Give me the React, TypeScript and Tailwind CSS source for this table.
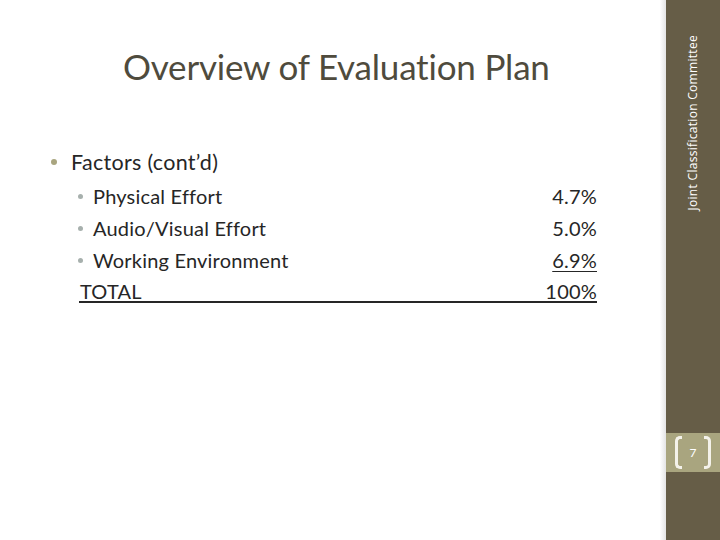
import React from 'react';

const rows = [
  { label: 'Physical Effort', value: '4.7%' },
  { label: 'Audio/Visual Effort', value: '5.0%' },
  { label: 'Working Environment', value: '6.9%', underline: true },
];

const App = () => {
  return (
    <div className="w-[720px] h-[540px] flex bg-white overflow-hidden" style={{ fontFamily: 'Lato, "Open Sans", sans-serif' }}>
      {/* slide body */}
      <div className="flex-1 flex flex-col">
        <h1 className="pt-[44px] pl-[123px] text-[35px] leading-[44px] text-[#4f4b3d] tracking-[-0.2px]">
          Overview of Evaluation Plan
        </h1>

        <div className="mt-[58px] pl-[51px] text-[#262626]">
          <div className="flex items-center h-[32px] text-[21.5px] tracking-[0.3px]">
            <span className="w-[6px] h-[6px] rounded-full bg-[#a9a57f]"></span>
            <span className="ml-[14px]">Factors (cont’d)</span>
          </div>

          <div className="mt-[2px] w-[546px] pl-[27px]">
            {rows.map((row) => (
              <div key={row.label} className="flex items-center h-[32px] text-[20px] tracking-[0.2px]">
                <span className="w-[5px] h-[5px] rounded-full bg-[#a7b0ad]"></span>
                <span className="ml-[10px] flex-1">{row.label}</span>
                <span className={row.underline ? 'underline decoration-1 underline-offset-[3px]' : ''}>{row.value}</span>
              </div>
            ))}
            <div className="flex items-end h-[27px] ml-[1px] text-[20px] tracking-[0.2px] leading-none border-b-2 border-[#262626]">
              <span className="flex-1 pl-[1px]">TOTAL</span>
              <span>100%</span>
            </div>
          </div>
        </div>
      </div>

      {/* right band */}
      <div className="w-[6px] bg-gradient-to-r from-white to-[#e4e4e4]"></div>
      <div className="w-[54px] bg-[#665d47] flex flex-col">
        <div className="h-[212px] flex items-end justify-center pb-[2px]">
          <span
            className="text-white text-[12px] whitespace-nowrap tracking-[0.3px]"
            style={{ writingMode: 'vertical-rl', transform: 'rotate(180deg)', fontFamily: '"Open Sans", sans-serif' }}
          >
            Joint Classification Committee
          </span>
        </div>
        <div className="mt-[221px] h-[39px] bg-[#a9a57f] flex items-center justify-center">
          <div className="w-[36px] h-[33px] relative flex items-center justify-center">
            <span className="absolute left-0 top-0 bottom-0 w-[7px] border-l-[3px] border-y-[3px] border-[#f4f2ea] rounded-l-[5px]"></span>
            <span className="absolute right-0 top-0 bottom-0 w-[7px] border-r-[3px] border-y-[3px] border-[#f4f2ea] rounded-r-[5px]"></span>
            <span className="text-[12px] text-white">7</span>
          </div>
        </div>
      </div>
    </div>
  );
};

export default App;
